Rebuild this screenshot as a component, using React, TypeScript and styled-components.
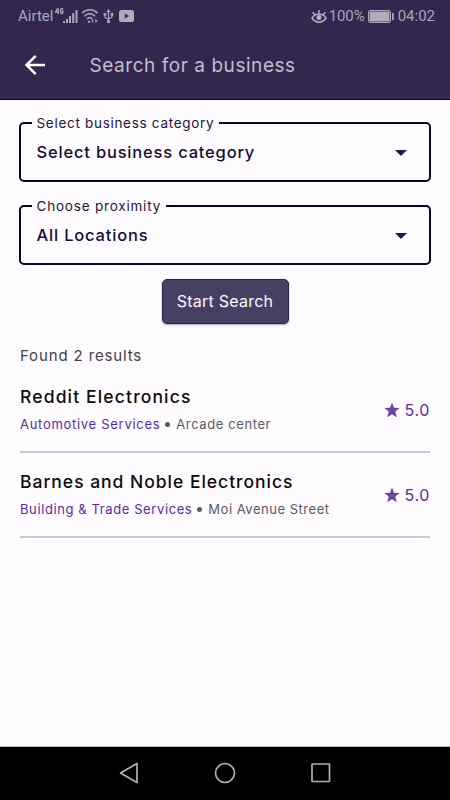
import React from 'react';
import styled, { createGlobalStyle } from 'styled-components';

const GlobalStyle = createGlobalStyle`
  * { box-sizing: border-box; }
  body { margin: 0; background: #fefbff; }
`;

const Screen = styled.div`
  width: 450px;
  height: 800px;
  display: flex;
  flex-direction: column;
  overflow: hidden;
  background: #fefbff;
  font-family: Inter, sans-serif;
  white-space: nowrap;
`;

const Header = styled.header`
  height: 100px;
  flex: none;
  background: #332750;
  border-bottom: 1px solid #08021c;
`;

const StatusBar = styled.div`
  height: 32px;
  padding: 0 15px 0 18px;
  display: flex;
  justify-content: space-between;
  align-items: center;
  color: #aca5b9;
  font: 400 15px/32px Roboto, sans-serif;
`;

const StatusGroup = styled.div`
  display: flex;
  align-items: center;
  svg { display: block; flex: none; }
`;

const LeftStatus = styled(StatusGroup)`
  svg:nth-of-type(2) { margin-left: 2px; }
  svg:nth-of-type(3) { margin-left: 4px; }
  svg:nth-of-type(4) { margin-left: 5px; }
`;

const Carrier = styled.span`
  width: 37px;
`;

const Clock = styled.span`
  margin-left: 4px;
`;

const Percent = styled.span`
  width: 39px;
  margin-left: 2px;
  letter-spacing: -0.1px;
`;

const AppBar = styled.div`
  height: 66px;
  padding-left: 23px;
  display: flex;
  align-items: center;
`;

const BackButton = styled.button`
  width: 24px;
  height: 24px;
  padding: 0;
  border: 0;
  background: none;
  svg { display: block; }
`;

const Title = styled.h1`
  margin: 1px 0 0 42.5px;
  font-size: 19px;
  font-weight: 400;
  letter-spacing: 0.55px;
  color: #c2bdcb;
`;

const Content = styled.main`
  flex: 1;
  padding: 22px 19px 0;
`;

const Field = styled.div`
  position: relative;
  height: 60px;
  margin-bottom: 23px;
  padding: 0 22px 0 15.5px;
  border: 2px solid #0b0726;
  border-radius: 5px;
  display: flex;
  align-items: center;
  justify-content: space-between;
  svg { margin-top: 2px; }
`;

const FieldLabel = styled.span`
  position: absolute;
  left: 11px;
  top: -10px;
  padding: 0 5px 0 4.5px;
  line-height: 18px;
  background: #fefbff;
  color: #1d1638;
  font-size: 13.5px;
  letter-spacing: ${(p: { $spacing: number }) => p.$spacing}px;
`;

const FieldValue = styled.span`
  margin-bottom: 1px;
  color: #140d35;
  font-size: 16.5px;
  font-weight: 500;
  letter-spacing: 0.81px;
  line-height: 20px;
`;

const SearchButton = styled.button`
  display: block;
  width: 127px;
  height: 45px;
  margin: -9px auto 0;
  padding: 0;
  border: 1px solid #292050;
  border-radius: 5px;
  background: #464163;
  box-shadow: 0 1px 2px rgba(0, 0, 0, 0.35);
  color: #fbf9fe;
  font: 400 16px/43px Inter, sans-serif;
  letter-spacing: 0.25px;
`;

const Results = styled.section`
  padding: 0 1px;
`;

const Count = styled.p`
  margin: 22px 0 2px;
  font-size: 15px;
  line-height: 20px;
  letter-spacing: 0.86px;
  color: #434246;
`;

const ResultRow = styled.article`
  height: 85px;
  border-bottom: 2px solid #cdc9d2;
  display: flex;
  justify-content: space-between;
  align-items: center;
`;

const ResultName = styled.h2`
  margin: 0;
  font-size: 17.5px;
  font-weight: 500;
  line-height: 24px;
  letter-spacing: ${(p: { $spacing: number }) => p.$spacing}px;
  color: #0c0b0e;
`;

const Details = styled.div`
  margin-top: 5px;
  display: flex;
  align-items: center;
  font-size: 13px;
  line-height: 20px;
  color: #5c5a60;
`;

const Category = styled.span`
  color: #5a2d9c;
  letter-spacing: ${(p: { $spacing: number }) => p.$spacing}px;
`;

const Dot = styled.i`
  width: 5px;
  height: 5px;
  margin: 0 6px 0 5px;
  border-radius: 50%;
  background: #5c5a60;
`;

const Place = styled.span`
  letter-spacing: ${(p: { $spacing: number }) => p.$spacing}px;
`;

const Rating = styled.div`
  display: flex;
  align-items: center;
  gap: 4.5px;
  color: #5a2d9c;
  font-size: 16px;
  line-height: 20px;
  letter-spacing: 0.6px;
  svg { display: block; }
`;

const NavBar = styled.nav`
  height: 54px;
  flex: none;
  padding: 0 118px;
  border-top: 1px solid #bdbbbf;
  background: #000;
  display: flex;
  align-items: center;
  justify-content: space-between;
  svg { display: block; margin-bottom: 1px; }
`;

const businesses = [
  { name: 'Reddit Electronics', nameSpacing: 1.15, category: 'Automotive Services', catSpacing: 0.71, place: 'Arcade center', placeSpacing: 0.6, rating: '5.0' },
  { name: 'Barnes and Noble Electronics', nameSpacing: 0.98, category: 'Building & Trade Services', catSpacing: 0.6, place: 'Moi Avenue Street', placeSpacing: 0.52, rating: '5.0' },
];

const SignalIcon = () => (
  <svg width="24" height="20" viewBox="0 0 24 20" fill="#aca5b9">
    <path
      d="M2.500 2.200.7 6H4M3.200 2.200V8M8 3.400C7.200 2 5.500 2.300 5.500 4.200v1.900C5.500 8 8 8 8 6.300V5.200H6.700"
      fill="none"
      stroke="#aca5b9"
      strokeWidth="1.300"
    />
    <path d="M8 15h2v2H8zM11 13h2v4h-2zM14 10h2v7h-2zM17.200 7h2v10h-2zM20.500 4h2v13h-2z" />
  </svg>
);

const WifiIcon = () => (
  <svg width="18" height="18" viewBox="0 0 18 18" fill="none" stroke="#aca5b9" strokeWidth="1.600">
    <path d="M1 6.300C5.500 1.600 12 1.600 16.500 6.300M3.400 9.200c3.300-3.400 7.400-3.400 10.700 0M6 12c1.800-1.800 3.800-1.800 5.500 0" />
    <path d="M7 13.800h2v2H7zM10.200 14l2-1.900v3.800zM16.800 14l-2.500-2v4z" fill="#aca5b9" stroke="none" />
  </svg>
);

const UsbIcon = () => (
  <svg width="11" height="15" viewBox="0 0 11 16" fill="none" stroke="#aca5b9" strokeWidth="1.300">
    <path d="M5.500 2v11M1.700 6v2.200q0 1.700 3.800 2.200M9.300 6v1.800q0 1.900-3.800 2.400" />
    <path d="M5.500 0 8 3.300H3zM.3 4.300h2.900v2.800H.3zM7.800 4.300h2.900v2.800H7.800z" fill="#aca5b9" stroke="none" />
    <circle cx="5.500" cy="13.300" r="1.800" fill="#aca5b9" stroke="none" />
  </svg>
);

const VideoIcon = () => (
  <svg width="15" height="12" viewBox="0 0 15 12">
    <rect width="15" height="12" rx="2.600" fill="#b3acbf" />
    <path d="M5.800 3.600 10 6 5.800 8.400z" fill="#332750" />
  </svg>
);

const EyeIcon = () => (
  <svg width="16" height="15" viewBox="0 0 16 15" fill="none" stroke="#b5afc0" strokeWidth="1.500">
    <path d="M1 9c3.500-5.200 10.500-5.200 14 0-3.500 5.500-10.500 5.500-14 0zM8 4.700V1M4 5.800 1.500 3.200M12 5.800l2.500-2.600" />
    <circle cx="8" cy="8.600" r="2.500" fill="#b5afc0" stroke="none" />
  </svg>
);

const BatteryIcon = () => (
  <svg width="26" height="13" viewBox="0 0 26 13">
    <rect x=".5" y=".5" width="22" height="12" rx="1.500" fill="none" stroke="#aca5b9" />
    <rect x="1.500" y="1.500" width="20" height="10" fill="#b3acbf" />
    <path d="M24 3h1.800v7H24z" fill="#aca5b9" />
  </svg>
);

const Caret = () => (
  <svg width="12" height="6" viewBox="0 0 12 6">
    <path d="M0 0h12L6 6z" fill="#231947" />
  </svg>
);

const StarIcon = () => (
  <svg width="16" height="16" viewBox="0 0 15 15">
    <path d="m7.500.5 1.900 4.800 5.200.4-4 3.300 1.300 5.200-4.400-2.800-4.400 2.800 1.300-5.200-4-3.300 5.200-.4z" fill="#6b489f" />
  </svg>
);

function SelectField({ label, value, spacing }: { label: string; value: string; spacing: number }) {
  return (
    <Field>
      <FieldLabel $spacing={spacing}>{label}</FieldLabel>
      <FieldValue>{value}</FieldValue>
      <Caret />
    </Field>
  );
}

export default function App() {
  return (
    <Screen>
      <GlobalStyle />
      <Header>
        <StatusBar>
          <LeftStatus>
            <Carrier>Airtel</Carrier>
            <SignalIcon />
            <WifiIcon />
            <UsbIcon />
            <VideoIcon />
          </LeftStatus>
          <StatusGroup>
            <EyeIcon />
            <Percent>100%</Percent>
            <BatteryIcon />
            <Clock>04:02</Clock>
          </StatusGroup>
        </StatusBar>
        <AppBar>
          <BackButton aria-label="Back">
            <svg width="24" height="24" viewBox="0 0 24 24" fill="none" stroke="#fff" strokeWidth="2.500">
              <path d="M22 12H4M12.700 2.800 3.500 12l9.200 9.200" />
            </svg>
          </BackButton>
          <Title>Search for a business</Title>
        </AppBar>
      </Header>
      <Content>
        <SelectField label="Select business category" value="Select business category" spacing={0.7} />
        <SelectField label="Choose proximity" value="All Locations" spacing={0.8} />
        <SearchButton>Start Search</SearchButton>
        <Results>
          <Count>Found 2 results</Count>
          {businesses.map((b) => (
            <ResultRow key={b.name}>
              <div>
                <ResultName $spacing={b.nameSpacing}>{b.name}</ResultName>
                <Details>
                  <Category $spacing={b.catSpacing}>{b.category}</Category>
                  <Dot />
                  <Place $spacing={b.placeSpacing}>{b.place}</Place>
                </Details>
              </div>
              <Rating>
                <StarIcon />
                {b.rating}
              </Rating>
            </ResultRow>
          ))}
        </Results>
      </Content>
      <NavBar>
        <svg width="21" height="22" viewBox="0 0 21 22" fill="none" stroke="#b0b0b0" strokeWidth="1.700" strokeLinejoin="round">
          <path d="M19 1.500v19L2.500 11z" />
        </svg>
        <svg width="22" height="22" viewBox="0 0 22 22" fill="none" stroke="#b0b0b0" strokeWidth="1.700">
          <circle cx="11" cy="11" r="9.500" />
        </svg>
        <svg width="22" height="22" viewBox="0 0 22 22" fill="none" stroke="#b0b0b0" strokeWidth="1.700">
          <rect x="2" y="2" width="17.500" height="17.500" rx=".5" />
        </svg>
      </NavBar>
    </Screen>
  );
}
